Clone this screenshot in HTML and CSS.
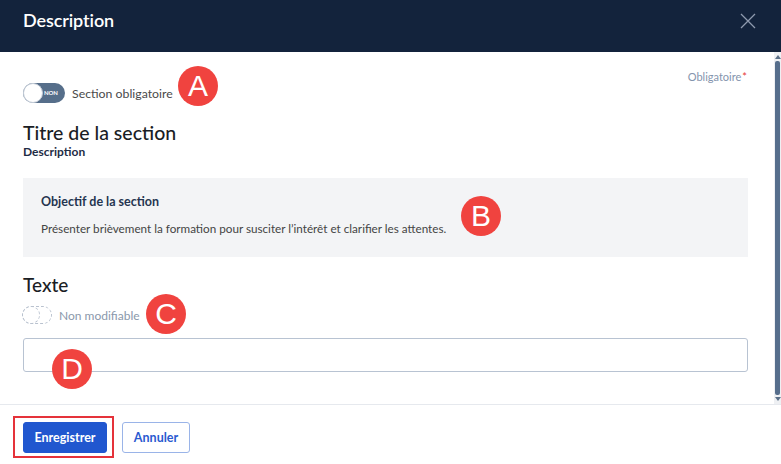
FILE: index.html
```html
<!DOCTYPE html>
<html lang="fr">
<head>
<meta charset="utf-8">
<title>Description</title>
<link rel="stylesheet" href="styles.css">
</head>
<body>
<div class="modal">
  <header class="modal-header">
    <h1 class="modal-title">Description</h1>
    <button class="close-btn" aria-label="Fermer">
      <svg width="16" height="16" viewBox="0 0 16 16"><path d="M1 1L15 15M15 1L1 15" stroke="#8f9aae" stroke-width="1.3" fill="none"/></svg>
    </button>
  </header>
  <div class="modal-main">
    <div class="modal-body">
      <div class="top-row">
        <div class="toggle-row">
          <span class="toggle"><span class="knob"></span><span class="toggle-text">NON</span></span>
          <span class="toggle-label">Section obligatoire</span>
          <span class="badge badge-a">A</span>
        </div>
        <div class="required">Obligatoire<span class="star">*</span></div>
      </div>
      <h2 class="section-title">Titre de la section</h2>
      <div class="section-sub">Description</div>
      <div class="objective">
        <div class="objective-title">Objectif de la section</div>
        <div class="objective-text">Présenter brièvement la formation pour susciter l’intérêt et clarifier les attentes.</div>
        <span class="badge badge-b">B</span>
      </div>
      <h2 class="texte-title">Texte</h2>
      <div class="toggle-row toggle-row-disabled">
        <span class="toggle-disabled"><span class="knob-disabled"></span></span>
        <span class="toggle-label disabled">Non modifiable</span>
        <span class="badge badge-c">C</span>
      </div>
      <div class="input-wrap">
        <div class="text-input"></div>
        <span class="badge badge-d">D</span>
      </div>
    </div>
    <div class="scrollbar">
      <span class="arrow-up"></span>
      <span class="thumb"></span>
      <span class="arrow-down"></span>
    </div>
  </div>
  <footer class="modal-footer">
    <span class="highlight"><button class="btn btn-primary">Enregistrer</button></span>
    <button class="btn btn-secondary">Annuler</button>
  </footer>
</div>
</body>
</html>
```
FILE: styles.css
```css
* { box-sizing: border-box; }
html, body { margin: 0; padding: 0; background: #fff; }
body { font-family: Lato, "Open Sans", sans-serif; color: #333; }
.modal { width: 781px; height: 464px; display: flex; flex-direction: column; background: #fff; overflow: hidden; }
.modal-header { height: 52px; background: #13233c; display: flex; align-items: flex-start; justify-content: space-between; padding: 9px 25px 0 23px; flex: none; }
.modal-title { margin: 0; color: #fff; font-size: 18px; line-height: 22px; font-weight: 600; letter-spacing: -0.1px; }
.close-btn { background: none; border: 0; padding: 0; width: 16px; height: 16px; display: flex; cursor: pointer; margin-top: 4px; }
.modal-main { height: 353px; display: flex; flex: none; border-bottom: 1px solid #e6e9ee; }
.modal-body { flex: 1; padding: 18px 26px 0 23px; position: relative; }
.scrollbar { width: 7px; background: #eef0f3; display: flex; flex-direction: column; align-items: center; }
.arrow-up { width: 0; height: 0; border-left: 3px solid transparent; border-right: 3px solid transparent; border-bottom: 4px solid #5a6f88; margin-top: 3px; }
.arrow-down { width: 0; height: 0; border-left: 3px solid transparent; border-right: 3px solid transparent; border-top: 4px solid #5a6f88; margin-bottom: 3px; }
.thumb { flex: 1; width: 5px; background: #566e8c; border-radius: 2px; margin: 2px 0; }
.top-row { display: flex; justify-content: space-between; align-items: flex-start; }
.required { font-size: 11px; color: #8494ad; line-height: 14px; margin-right: 1px; }
.star { color: #e53935; margin-left: 1px; }
.toggle-row { display: flex; align-items: center; margin-top: 13px; position: relative; height: 20px; }
.toggle { width: 42px; height: 20px; border-radius: 10px; background: #566e8a; position: relative; display: inline-flex; align-items: center; flex: none; }
.knob { position: absolute; left: 0; top: 0; width: 20px; height: 20px; border-radius: 50%; background: #fff; border: 1px solid #c5cdd8; }
.toggle-text { position: absolute; right: 7px; top: 6px; font-size: 6px; line-height: 8px; font-weight: 700; color: #fff; }
.toggle-label { font-size: 12.3px; color: #4a4a4a; margin-left: 7px; }
.toggle-label.disabled { color: #8a98ab; margin-left: 7px; font-size: 12px; }
.badge { position: absolute; width: 40px; height: 40px; border-radius: 50%; background: #f0433f; color: #fff; font-family: "Liberation Sans", Arial, sans-serif; font-size: 30px; line-height: 40px; text-align: center; }
.badge-a { left: 155px; top: -17px; }
.section-title { margin: 19px 0 0; font-size: 19.5px; line-height: 22px; font-weight: 500; color: #1a1d24; }
.section-sub { font-size: 12px; line-height: 14px; font-weight: 700; color: #1e2d45; margin-top: 1px; }
.objective { margin-top: 19px; height: 79px; background: #f3f4f6; padding: 17px 18px 0; position: relative; }
.objective-title { font-size: 12.5px; line-height: 14px; font-weight: 700; color: #253550; }
.objective-text { font-size: 11.7px; line-height: 14px; color: #444; margin-top: 12px; }
.badge-b { left: 438px; top: 18px; }
.texte-title { margin: 17px 0 0; font-size: 19px; line-height: 22px; font-weight: 500; color: #1a1d24; }
.toggle-row-disabled { margin-top: 10px; height: 18px; }
.toggle-disabled { width: 30px; height: 18px; border-radius: 9px; border: 1px dashed #b9c2cf; position: relative; flex: none; margin-left: -1px; }
.knob-disabled { position: absolute; left: -1px; top: -1px; width: 18px; height: 18px; border-radius: 50%; border: 1px dashed #b9c2cf; }
.badge-c { left: 123px; top: -12px; }
.input-wrap { margin-top: 14px; position: relative; }
.text-input { height: 34px; border: 1px solid #b8c3d2; border-radius: 3px; background: #fff; }
.badge-d { left: 29px; top: 11px; }
.modal-footer { flex: 1; display: flex; align-items: flex-start; padding: 11px 0 0 13px; gap: 8px; }
.highlight { border: 2px solid #e5323a; padding: 4px 5px 3px 8px; display: flex; }
.btn { font-family: Lato, "Open Sans", sans-serif; font-size: 12.5px; font-weight: 700; height: 31px; border-radius: 3px; padding: 0 10px; cursor: pointer; }
.btn-primary { background: #2157cf; color: #fff; border: 1px solid #2157cf; width: 84px; }
.btn-secondary { background: #fff; color: #2a5ad0; border: 1px solid #9ab4e8; width: 68px; margin-top: 6px; }
```
